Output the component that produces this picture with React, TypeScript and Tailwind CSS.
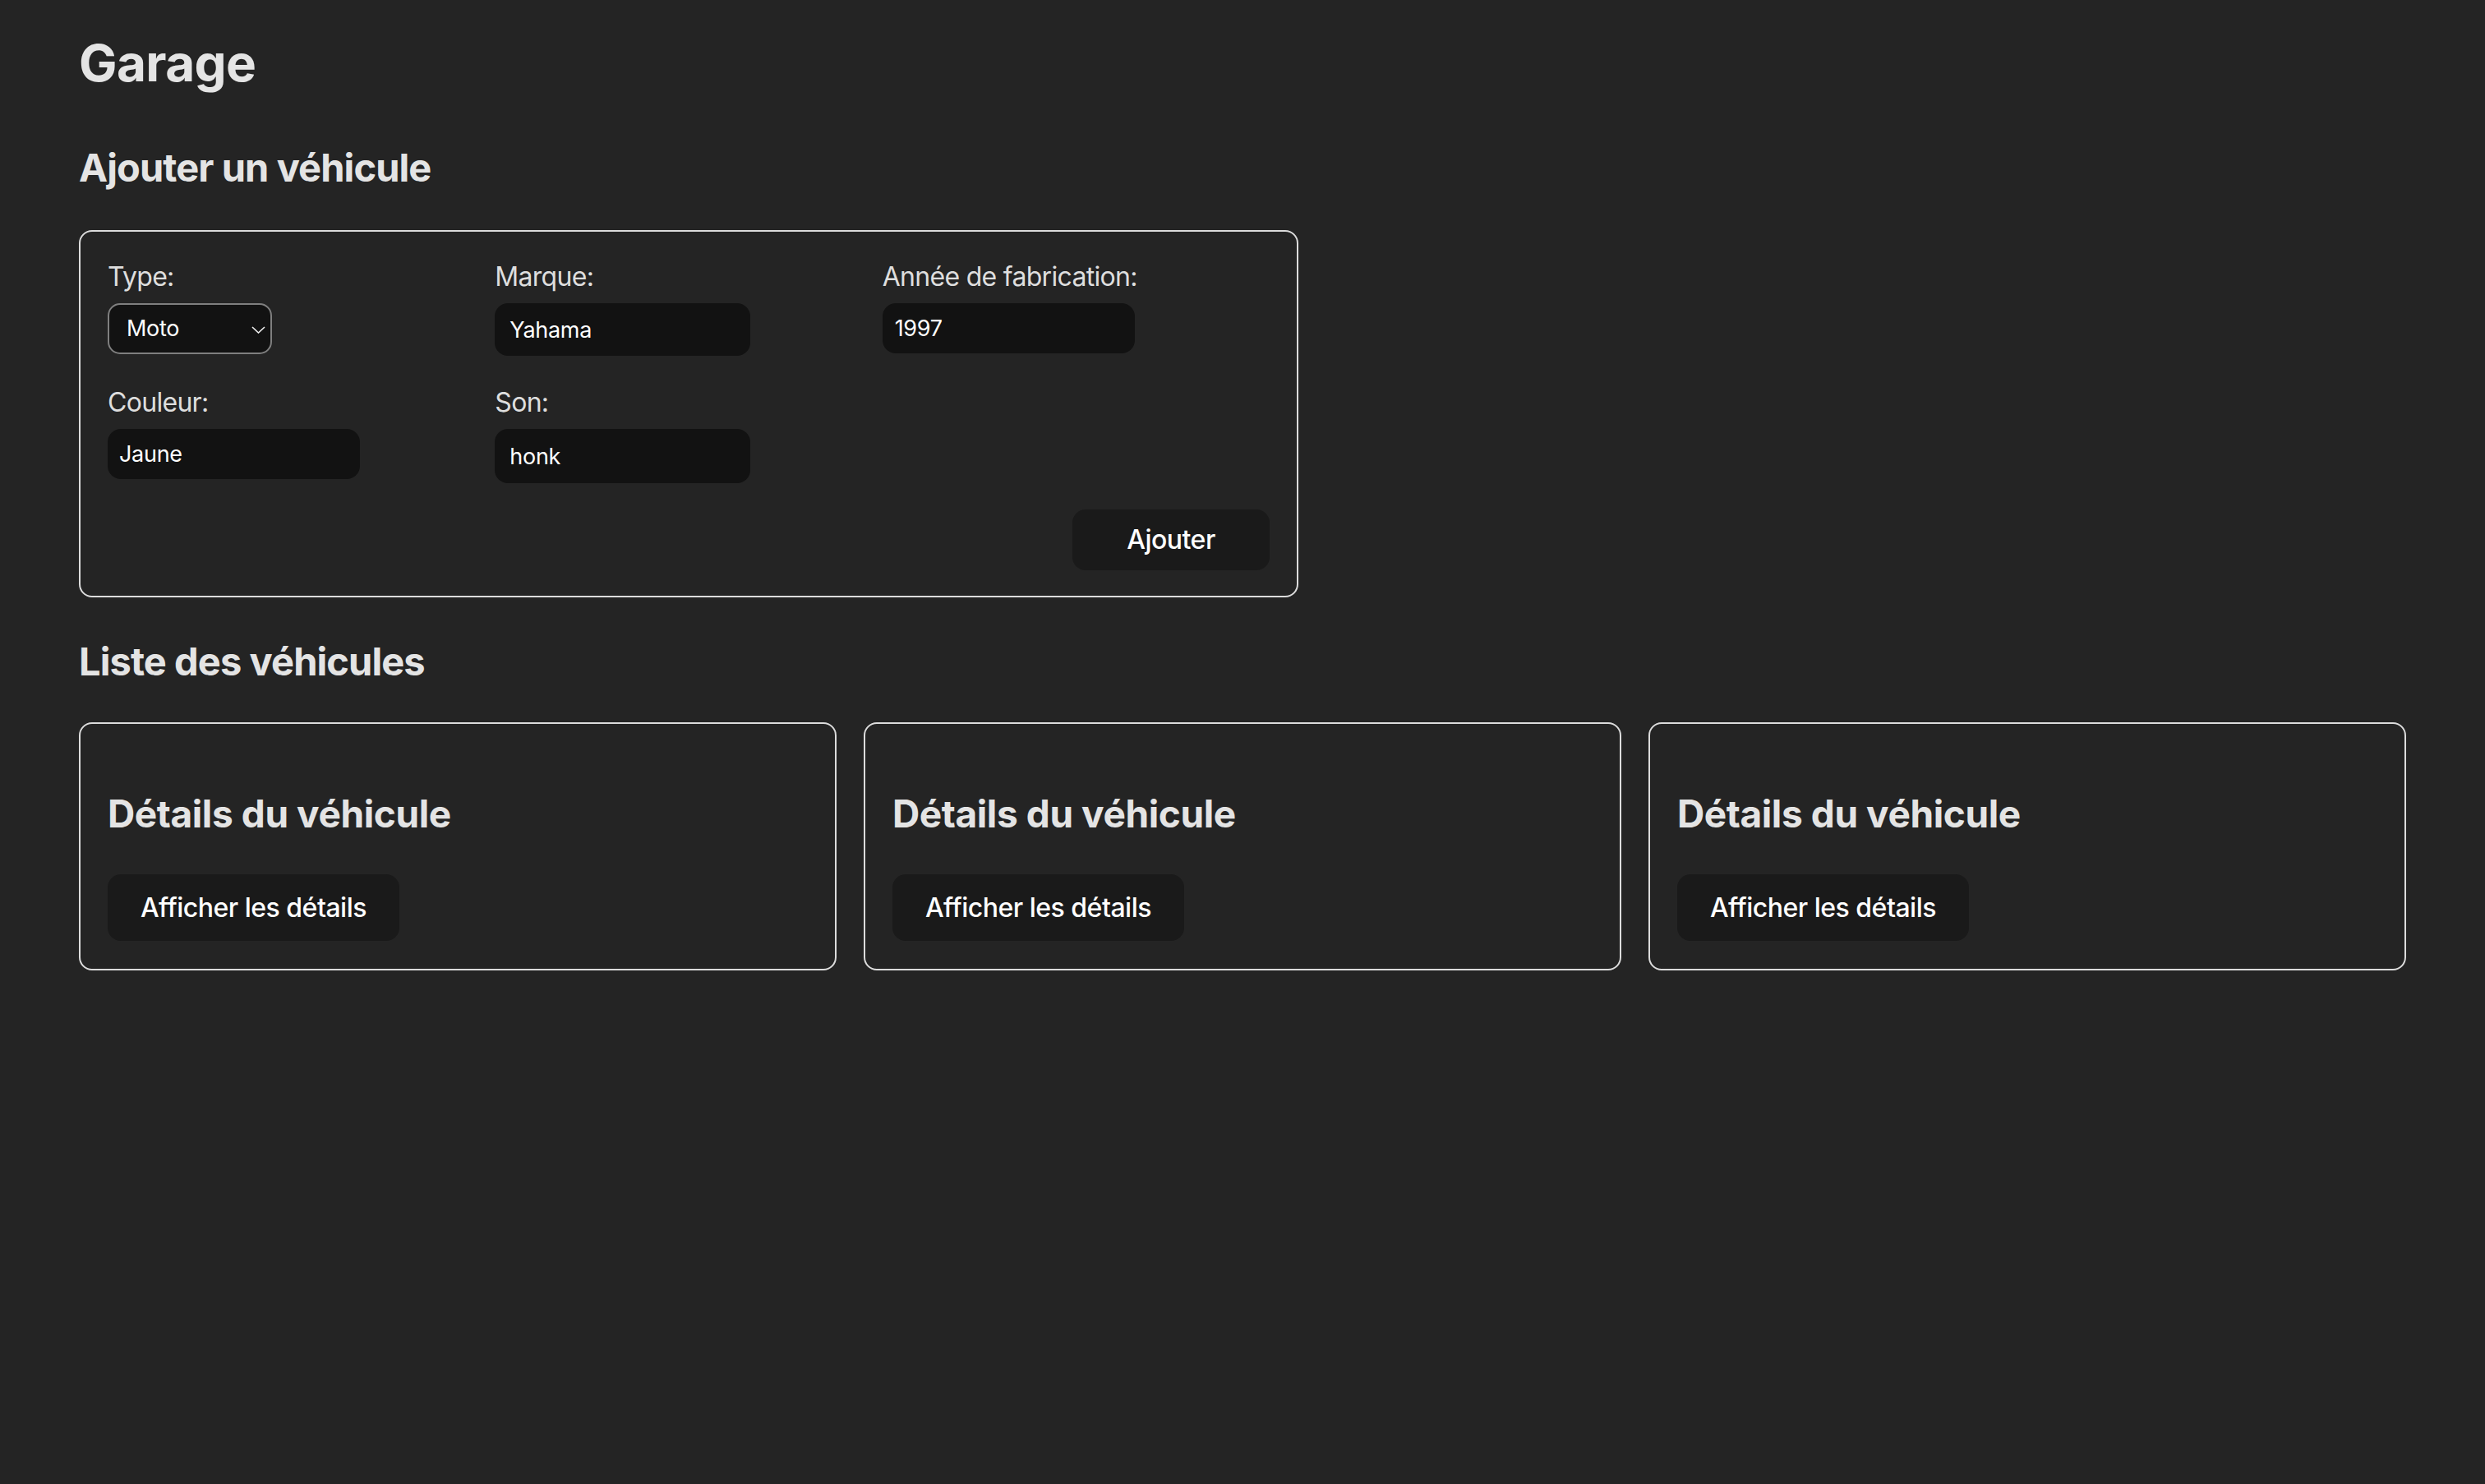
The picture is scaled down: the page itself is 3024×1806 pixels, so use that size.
import { useState } from 'react'

const vehicles = [1, 2, 3]

function Field({ label, children }: { label: string; children: React.ReactNode }) {
  return (
    <div className="flex flex-col items-start">
      <label className="text-[32px] leading-[48px] tracking-[-0.7px] text-[#dedede]">{label}</label>
      <div className="mt-2">{children}</div>
    </div>
  )
}

export default function App() {
  const [type, setType] = useState('Moto')
  const [marque, setMarque] = useState('Yahama')
  const [annee, setAnnee] = useState('1997')
  const [couleur, setCouleur] = useState('Jaune')
  const [son, setSon] = useState('honk')

  const input = 'block rounded-[16px] bg-[#121212] text-[27px] tracking-[-0.3px] text-white outline-none'

  return (
    <div className="min-h-screen bg-[#242424] px-[96px] pt-[41px] pb-20 font-['Inter',sans-serif] text-[#e4e4e4]">
      <h1 className="text-[62px] leading-[72px] font-bold tracking-[-0.6px]">Garage</h1>

      <h2 className="mt-[55px] text-[47px] leading-[72px] font-bold tracking-[-0.9px]">Ajouter un véhicule</h2>

      <form
        className="mt-[40px] w-[1484px] rounded-[16px] border-2 border-[#dcdcdc] px-[33px] pt-[31px] pb-[31px]"
        onSubmit={e => e.preventDefault()}
      >
        <div className="grid grid-cols-3 gap-y-[33px]">
          <Field label="Type:">
            <div className="relative w-[200px]">
              <select
                value={type}
                onChange={e => setType(e.target.value)}
                className="block h-[62px] w-[200px] appearance-none rounded-[15px] border-2 border-[#7f7f7f] bg-[#121212] pl-[21px] text-[27px] tracking-[-0.3px] text-white outline-none"
              >
                <option>Moto</option>
                <option>Voiture</option>
                <option>Camion</option>
              </select>
              <svg className="pointer-events-none absolute right-[8px] top-[28px]" width="17" height="9" viewBox="0 0 17 9" fill="none">
                <polyline points="1,1 8.5,8 16,1" stroke="#f0f0f0" strokeWidth="1.6" />
              </svg>
            </div>
          </Field>
          <Field label="Marque:">
            <input value={marque} onChange={e => setMarque(e.target.value)} className={`${input} h-[64px] w-[311px] pl-[18px]`} />
          </Field>
          <Field label="Année de fabrication:">
            <input value={annee} onChange={e => setAnnee(e.target.value)} className={`${input} h-[61px] w-[307px] pl-[15px]`} />
          </Field>
          <Field label="Couleur:">
            <input value={couleur} onChange={e => setCouleur(e.target.value)} className={`${input} h-[61px] w-[307px] pl-[14px]`} />
          </Field>
          <Field label="Son:">
            <input value={son} onChange={e => setSon(e.target.value)} className={`${input} h-[66px] w-[311px] pl-[18px]`} />
          </Field>
        </div>

        <div className="mt-[32px] flex justify-end">
          <button type="submit" className="h-[74px] w-[240px] rounded-[16px] bg-[#1a1a1a] text-[32px] font-medium tracking-[-0.5px] text-white">
            Ajouter
          </button>
        </div>
      </form>

      <h2 className="mt-[42px] text-[47px] leading-[72px] font-bold tracking-[-0.9px]">Liste des véhicules</h2>

      <div className="mt-[38px] grid grid-cols-3 gap-[33px]">
        {vehicles.map(v => (
          <div key={v} className="rounded-[16px] border-2 border-[#dcdcdc] px-[33px] pt-[33px] pb-[34px]">
            <h3 className="mt-[40px] text-[46px] leading-[72px] font-bold tracking-[-0.4px]">Détails du véhicule</h3>
            <button className="mt-[38px] h-[81px] rounded-[16px] bg-[#1a1a1a] px-[40px] text-[32px] font-medium tracking-[-0.5px] text-white">
              Afficher les détails
            </button>
          </div>
        ))}
      </div>
    </div>
  )
}
